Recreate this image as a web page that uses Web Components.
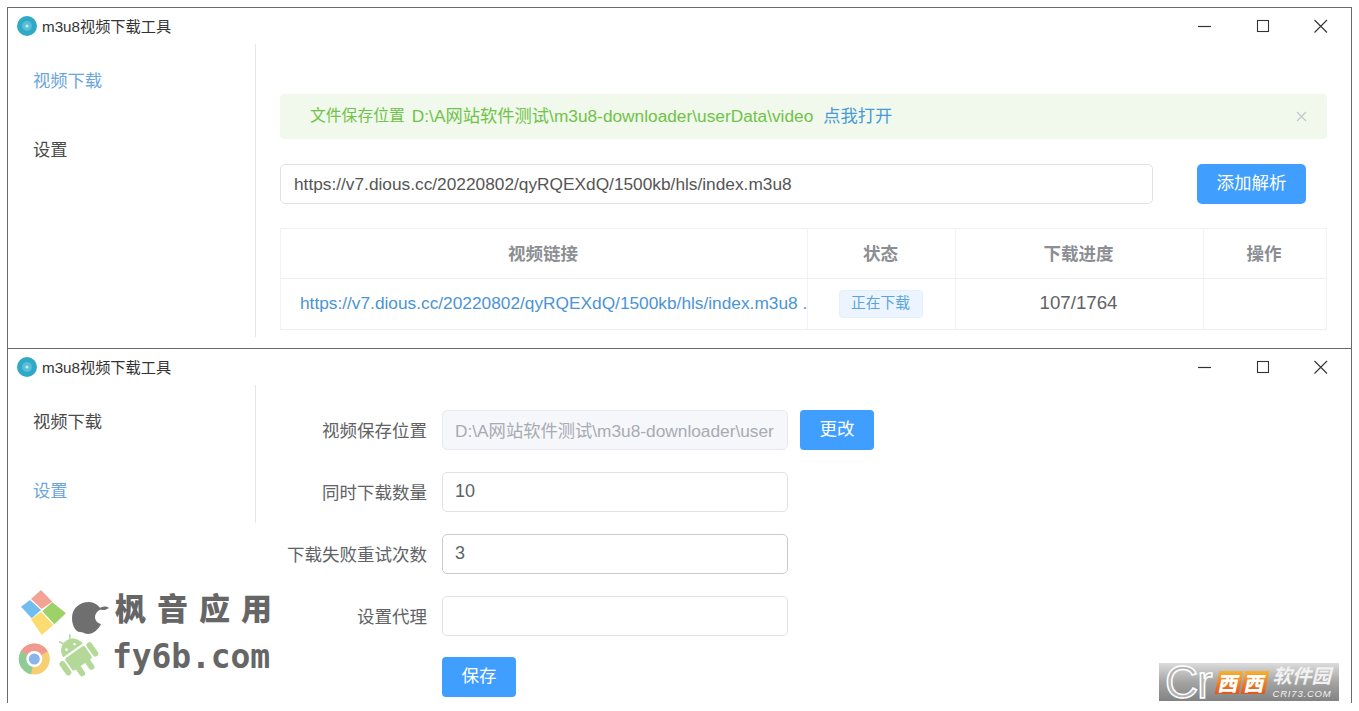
<!DOCTYPE html>
<html lang="zh">
<head>
<meta charset="utf-8">
<title>m3u8视频下载工具</title>
<style>
    html, body {
        margin: 0;
        height: 100%;
        background: #ffffff;
    }

    body {
        position: relative;
        overflow: hidden;
        padding: 7px 7px 0 7px;
        box-sizing: border-box;
        display: flex;
        flex-direction: column;
        font-family: "Liberation Sans", "Noto Sans CJK SC", sans-serif;
    }
</style>
</head>
<body>
<app-window active="0" body-height="293" side-height="293" pad-bottom="11">
    <alert-bar>
        <span slot="label">文件保存位置</span>
        D:\A网站软件测试\m3u8-downloader\userData\video
        <a slot="action">点我打开</a>
    </alert-bar>
    <url-bar value="https://v7.dious.cc/20220802/qyRQEXdQ/1500kb/hls/index.m3u8" button="添加解析"></url-bar>
    <task-table></task-table>
</app-window>
<app-window active="1" body-height="318" side-height="138" pad-bottom="0">
    <settings-form></settings-form>
</app-window>
<site-mark></site-mark>
<cr-mark></cr-mark>

<script>
// Barra del titolo e menu laterale comuni alle due finestre
class AppWindow extends HTMLElement {
    constructor() {
        super();
        this.attachShadow({ mode: "open" });
    }

    connectedCallback() {
        const active = this.getAttribute("active");
        const bodyHeight = this.getAttribute("body-height");
        const sideHeight = this.getAttribute("side-height");
        const padBottom = this.getAttribute("pad-bottom");
        this.shadowRoot.innerHTML = `
            <style>
                :host {
                    display: block;
                    border: 1px solid #6a6a6a;
                    border-bottom: none;
                    padding-bottom: ${padBottom}px;
                    background: #fff;
                }
                .title {
                    height: 36px;
                    display: flex;
                    align-items: center;
                    padding-left: 9px;
                    font-size: 15.2px;
                    color: #333;
                }
                .title span { padding-bottom: 2px; }
                .logo { width: 20px; height: 20px; margin-right: 5px; }
                .controls { margin-left: auto; display: flex; margin-right: 1px; }
                .controls svg { width: 58px; height: 36px; display: block; }
                .body { display: flex; height: ${bodyHeight}px; }
                .side {
                    width: 222px;
                    flex-shrink: 0;
                    border-right: 1px solid #e6e6e6;
                    height: ${sideHeight}px;
                    padding-left: 25px;
                    font-size: 17.3px;
                    color: #4a4a4a;
                }
                .side div { height: 69px; line-height: 75px; }
                .side div.on { color: #6aa5dc; }
                .main { flex: 1; min-width: 0; }
            </style>
            <div class="title">
                <svg class="logo" viewBox="0 0 20 20">
                    <circle cx="10" cy="10" r="10" fill="#2fa9c6"/>
                    <circle cx="10" cy="10" r="5" fill="#58bdd6"/>
                    <circle cx="10" cy="10" r="1.6" fill="#c5eaf2"/>
                </svg>
                <span>m3u8视频下载工具</span>
                <div class="controls">
                    <svg viewBox="0 0 58 36"><path d="M22 18.5h13" stroke="#333" stroke-width="1.2"/></svg>
                    <svg viewBox="0 0 58 36"><rect x="23.500" y="12.500" width="11" height="11" fill="none" stroke="#333" stroke-width="1.100"/></svg>
                    <svg viewBox="0 0 58 36"><path d="M22.500 12l12.500 12.500M35 12L22.500 24.500" stroke="#333" stroke-width="1.100" fill="none"/></svg>
                </div>
            </div>
            <div class="body">
                <div class="side">
                    <div class="${active === "0" ? "on" : ""}">视频下载</div>
                    <div class="${active === "1" ? "on" : ""}">设置</div>
                </div>
                <div class="main"><slot></slot></div>
            </div>
        `;
    }
}

class AlertBar extends HTMLElement {
    constructor() {
        super();
        this.attachShadow({ mode: "open" }).innerHTML = `
            <style>
                :host {
                    display: flex;
                    align-items: center;
                    height: 45px;
                    margin: 50px 24px 25px 24px;
                    padding: 0 20px 0 30px;
                    box-sizing: border-box;
                    background: #f0f9eb;
                    border-radius: 4px;
                    color: #70c24a;
                    font-size: 17.3px;
                    white-space: nowrap;
                }
                .text { display: flex; padding-bottom: 5px; align-items: center; }
                ::slotted([slot="label"]) { font-size: 15.8px; margin-right: 7px; }
                ::slotted(a) { color: #4a9ad8; margin-left: 10px; }
                .close { margin-left: auto; width: 11px; height: 11px; }
            </style>
            <div class="text"><slot name="label"></slot><slot></slot><slot name="action"></slot></div>
            <svg class="close" viewBox="0 0 11 11"><path d="M1 1l9 9M10 1l-9 9" stroke="#c4c8cc" stroke-width="1.200"/></svg>
        `;
    }
}

class UrlBar extends HTMLElement {
    constructor() {
        super();
        this.attachShadow({ mode: "open" });
    }

    connectedCallback() {
        this.shadowRoot.innerHTML = `
            <style>
                :host {
                    display: flex;
                    margin: 0 45px 24px 24px;
                    height: 40px;
                    font-size: 17.3px;
                }
                .input {
                    width: 873px;
                    box-sizing: border-box;
                    border: 1px solid #e0e2e6;
                    border-radius: 5px;
                    padding-left: 13px;
                    line-height: 38px;
                    color: #555;
                }
                .btn {
                    margin-left: auto;
                    width: 109px;
                    text-align: center;
                    line-height: 38px;
                    background: #409eff;
                    border-radius: 5px;
                    color: #fff;
                    font-size: 17.5px;
                }
            </style>
            <div class="input">${this.getAttribute("value")}</div>
            <div class="btn">${this.getAttribute("button")}</div>
        `;
    }
}

class TaskTable extends HTMLElement {
    constructor() {
        super();
        this.attachShadow({ mode: "open" }).innerHTML = `
            <style>
                :host {
                    display: grid;
                    grid-template-columns: 527px 148px 248px 123px;
                    grid-template-rows: 50px 51px;
                    margin: 0 24px 0 24px;
                    width: 1047px;
                    box-sizing: border-box;
                    border: 1px solid #f0f2f5;
                    border-width: 1px 0 0 1px;
                    font-size: 17.3px;
                    color: #606266;
                }
                div {
                    display: flex;
                    align-items: center;
                    justify-content: center;
                    box-sizing: border-box;
                    border-right: 1px solid #f0f2f5;
                    border-bottom: 1px solid #ebeef2;
                    padding-right: 2px;
                    white-space: nowrap;
                    overflow: hidden;
                    min-width: 0;
                }
                .head { font-weight: bold; color: #8b8e93; font-size: 17.5px; padding-bottom: 3px; }
                .link { justify-content: flex-start; padding-left: 19px; padding-right: 0; padding-bottom: 2px; color: #4a94d6; }
                .tag {
                    display: block;
                    width: 84px;
                    height: 28px;
                    line-height: 25px;
                    text-align: center;
                    background: #ecf5ff;
                    border: 1px solid #e3effb;
                    box-sizing: border-box;
                    border-radius: 4px;
                    color: #5aa3e0;
                    font-size: 14.700px;
                }
                .num { font-size: 18.700px; padding-bottom: 2px; }
            </style>
            <div class="head">视频链接</div>
            <div class="head">状态</div>
            <div class="head">下载进度</div>
            <div class="head">操作</div>
            <div class="link">https://v7.dious.cc/20220802/qyRQEXdQ/1500kb/hls/index.m3u8 .</div>
            <div><span class="tag">正在下载</span></div>
            <div class="num">107/1764</div>
            <div></div>
        `;
    }
}

class SettingsForm extends HTMLElement {
    constructor() {
        super();
        const rows = [
            ["视频保存位置", "D:\\A网站软件测试\\m3u8-downloader\\user", "disabled", "更改"],
            ["同时下载数量", "10", "", ""],
            ["下载失败重试次数", "3", "focus", ""],
            ["设置代理", "", "", ""],
        ];
        const html = rows.map(([label, value, cls, btn]) => `
            <div class="row">
                <label>${label}</label>
                <div class="input ${cls}">${value}</div>
                ${btn ? `<div class="btn wide">${btn}</div>` : ""}
            </div>
        `).join("");
        this.attachShadow({ mode: "open" }).innerHTML = `
            <style>
                :host {
                    display: flex;
                    flex-direction: column;
                    gap: 22px;
                    padding-top: 25px;
                    font-size: 18px;
                    color: #606266;
                }
                .row { display: flex; height: 40px; align-items: center; }
                label {
                    width: 171px;
                    text-align: right;
                    margin-right: 15px;
                    flex-shrink: 0;
                    white-space: nowrap;
                    font-size: 17.5px;
                    padding-bottom: 2px;
                }
                .input {
                    width: 346px;
                    height: 40px;
                    box-sizing: border-box;
                    border: 1px solid #e0e2e6;
                    border-radius: 5px;
                    padding-left: 12px;
                    line-height: 36px;
                    white-space: nowrap;
                    overflow: hidden;
                }
                .disabled { background: #f5f7fa; color: #a8abb2; border-color: #e8eaef; font-size: 17.3px; line-height: 40px; }
                .focus { border-color: #c8cbd0; }
                .btn {
                    width: 74px;
                    height: 40px;
                    line-height: 38px;
                    text-align: center;
                    background: #409eff;
                    border-radius: 4px;
                    color: #fff;
                    font-size: 17.5px;
                }
                .wide { margin-left: 12px; }
                .save { margin-left: 186px; margin-top: -2px; }
            </style>
            ${html}
            <div class="row"><div class="btn save">保存</div></div>
        `;
    }
}

// Filigrana in basso a sinistra
class SiteMark extends HTMLElement {
    constructor() {
        super();
        this.attachShadow({ mode: "open" }).innerHTML = `
            <style>
                :host {
                    position: absolute;
                    left: 18px;
                    top: 588px;
                    width: 258px;
                    height: 92px;
                    display: grid;
                    grid-template-columns: 96px 1fr;
                    grid-template-rows: 46px 46px;
                    color: #666;
                    font-weight: bold;
                }
                svg { display: block; overflow: visible; }
                .cn {
                    font-family: "Noto Sans CJK SC", sans-serif;
                    font-weight: 900;
                    font-size: 31px;
                    letter-spacing: 11px;
                    line-height: 38px;
                    margin-left: 1px;
                    white-space: nowrap;
                }
                .en {
                    font-family: "DejaVu Sans Mono", monospace;
                    font-size: 33px;
                    letter-spacing: -0.100px;
                    line-height: 46px;
                    margin-left: -2px;
                    white-space: nowrap;
                }
            </style>
            <svg width="96" height="46" viewBox="0 0 96 46">
                <path d="M23 2L34.300 13.700 23.700 21 13 11z" fill="#f4a295"/>
                <path d="M12 12L23 22 13.700 30.300 3 18.700z" fill="#71bdf2"/>
                <path d="M34.300 14.300L48 25.300 36.300 36.300 24.300 23z" fill="#9dd268"/>
                <path d="M23 23.700L35.300 37 23.700 47 13 31.300z" fill="#fbdc70"/>
                <path d="M54 30C54 20 62 14 71 14C76 14 80 17 83 21C79 23 77 26 77 29C77 32 79 35 83 36C81 41 75 46 70 46C67 46 65 44 62 44C58 44 54 38 54 30z" fill="#6f6f6f"/>
                <path d="M81 21C84 18 88 18 91 20C88 22 84 23 81 21z" fill="#6f6f6f"/>
            </svg>
            <div class="cn">枫音应用</div>
            <svg width="96" height="46" viewBox="0 0 96 46">
                <circle cx="16.300" cy="25" r="15.500" fill="#f5cf72"/>
                <path d="M16.300 25L2.900 17.200A15.500 15.500 0 0 1 29.700 17.200z" fill="#ee9a90"/>
                <path d="M16.300 25L2.900 17.200A15.500 15.500 0 0 0 13 40.200z" fill="#8fcb96"/>
                <circle cx="16.300" cy="25" r="8" fill="#fff"/>
                <circle cx="16.300" cy="25" r="5.500" fill="#8ab4ea"/>
                <g transform="translate(58.700 21.700) rotate(-35) scale(1.080)" fill="#b4d898">
                    <path d="M-11-6a11 11 0 0 1 22 0z"/>
                    <rect x="-11" y="-4" width="22" height="14" rx="2"/>
                    <rect x="-18" y="-4" width="5.500" height="15" rx="2.700"/>
                    <rect x="12.500" y="-4" width="5.500" height="15" rx="2.700"/>
                    <rect x="-8" y="8" width="5.500" height="11" rx="2.700"/>
                    <rect x="2.500" y="8" width="5.500" height="11" rx="2.700"/>
                    <path d="M-6-20l3 5M6-20l-3 5" stroke="#b4d898" stroke-width="1.500"/>
                    <circle cx="-4.500" cy="-10" r="1.200" fill="#fff"/>
                    <circle cx="4.500" cy="-10" r="1.200" fill="#fff"/>
                </g>
            </svg>
            <div class="en">fy6b.com</div>
        `;
    }
}

// Filigrana in basso a destra
class CrMark extends HTMLElement {
    constructor() {
        super();
        this.attachShadow({ mode: "open" }).innerHTML = `
            <style>
                :host {
                    position: absolute;
                    left: 1159px;
                    top: 663px;
                    width: 180px;
                    height: 38px;
                    display: flex;
                    align-items: center;
                    background: linear-gradient(180deg, #dcdcdc 0%, #a4a4a4 50%, #828282 100%);
                }
                .cr {
                    font-family: "Liberation Sans", sans-serif;
                    font-size: 46px;
                    color: #b4b4b4;
                    -webkit-text-stroke: 1.500px #fff;
                    margin-left: 6px;
                    letter-spacing: -1px;
                    line-height: 38px;
                    white-space: nowrap;
                }
                .xi { display: flex; gap: 2px; margin-left: 5px; }
                .xi span {
                    width: 24px;
                    height: 23px;
                    font-family: "Noto Sans CJK SC", sans-serif;
                    font-weight: 900;
                    font-size: 20px;
                    line-height: 23px;
                    color: #fff;
                    text-align: center;
                    background: linear-gradient(180deg, #f6b233, #e0561c);
                    transform: skewX(-12deg);
                }
                .txt { margin-left: 6px; font-style: italic; color: #f2f2f2; align-self: flex-start; margin-top: 2px; }
                .txt b {
                    display: block;
                    font-family: "Liberation Sans", "Noto Sans CJK SC", sans-serif;
                    font-size: 19.500px;
                    line-height: 23px;
                }
                .txt span {
                    display: block;
                    font-family: "Liberation Sans", sans-serif;
                    font-size: 9.500px;
                    letter-spacing: .8px;
                    line-height: 11px;
                }
            </style>
            <div class="cr">Cr</div>
            <div class="xi"><span>西</span><span>西</span></div>
            <div class="txt"><b>软件园</b><span>CRI73.COM</span></div>
        `;
    }
}

customElements.define("app-window", AppWindow);
customElements.define("alert-bar", AlertBar);
customElements.define("url-bar", UrlBar);
customElements.define("task-table", TaskTable);
customElements.define("settings-form", SettingsForm);
customElements.define("site-mark", SiteMark);
customElements.define("cr-mark", CrMark);
</script>
</body>
</html>
